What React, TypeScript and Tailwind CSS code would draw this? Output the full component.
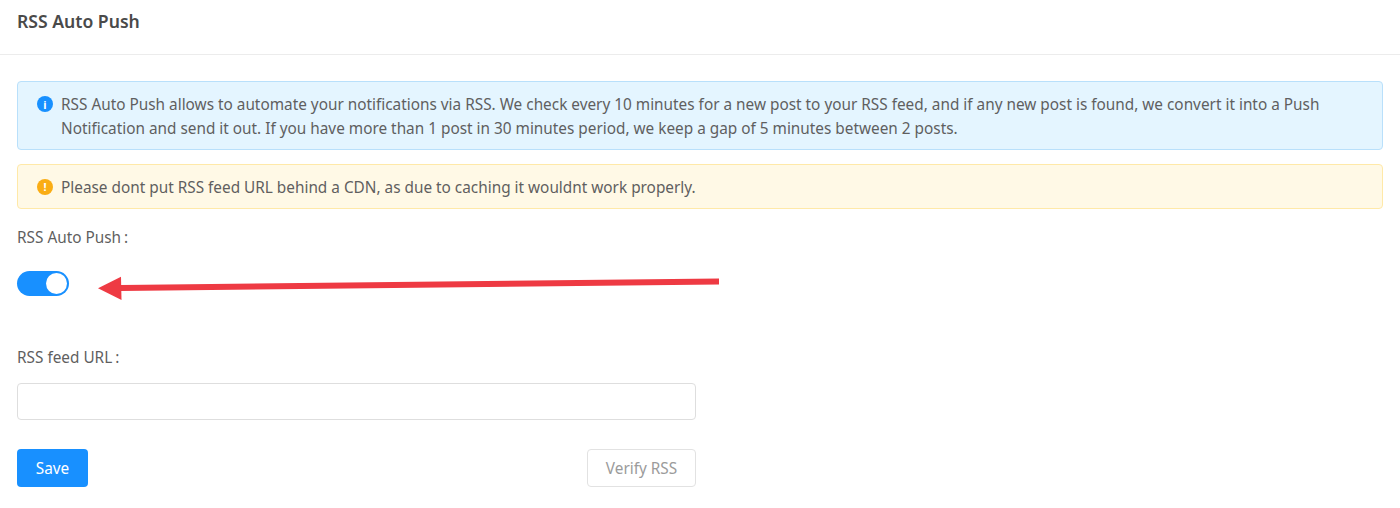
export default function App() {
  return (
    <div className="relative h-[508px] w-[1400px] overflow-hidden bg-white font-['Noto_Sans',sans-serif] text-[15.35px] text-[#5f5f5f]">
      <header className="flex h-[55px] items-start border-b border-[#ececec] px-[17px] pt-[9px]">
        <h1 className="text-[17.6px] font-semibold leading-[24px] text-[#4a4a4a]">RSS Auto Push</h1>
      </header>

      <div className="flex flex-col px-[17px] pt-[26px]">
        <div className="flex h-[69px] gap-[8px] rounded-[4px] border border-[#b9e0fb] bg-[#e4f5ff] pl-[19px] pr-[40px] pt-[10px]">
          <span className="mt-[4px] flex h-[16px] w-[16px] shrink-0 items-center justify-center rounded-full bg-[#1890ff] text-[11px] font-bold leading-none text-white">i</span>
          <p className="leading-[24px]">
            RSS Auto Push allows to automate your notifications via RSS. We check every 10 minutes for a new post to your RSS feed, and if any new post is found, we convert it into a Push Notification and send it out. If you have more than 1 post in 30 minutes period, we keep a gap of 5 minutes between 2 posts.
          </p>
        </div>

        <div className="mt-[14px] flex h-[45px] items-center gap-[8px] rounded-[4px] border border-[#ffe9a8] bg-[#fff9e6] pl-[19px]">
          <span className="flex h-[16px] w-[16px] shrink-0 items-center justify-center rounded-full bg-[#faad14] text-[11px] font-bold leading-none text-white">!</span>
          <p className="leading-[24px]">Please dont put RSS feed URL behind a CDN, as due to caching it wouldnt work properly.</p>
        </div>

        <label className="mt-[16px] leading-[24px]">RSS Auto Push<span className="ml-[3px]">:</span></label>

        <button className="mt-[22px] flex h-[25px] w-[52px] items-center justify-end rounded-full bg-[#1890ff] pr-[2px]">
          <span className="h-[21px] w-[21px] rounded-full bg-white" />
        </button>

        <label className="mt-[49px] leading-[24px]">RSS feed URL<span className="ml-[3px]">:</span></label>

        <input className="mt-[14px] h-[37px] w-[679px] rounded-[4px] border border-[#dedede] bg-white" />

        <div className="mt-[29px] flex w-[679px] items-center justify-between">
          <button className="h-[38px] w-[71px] rounded-[4px] bg-[#1890ff] pt-[2px] text-white">Save</button>
          <button className="h-[38px] w-[109px] rounded-[4px] border border-[#e2e2e2] bg-white pt-[2px] text-[#9b9b9b]">Verify RSS</button>
        </div>
      </div>

      {/* annotation arrow over the form */}
      <svg className="absolute left-[90px] top-[270px]" width="640" height="40" viewBox="0 0 640 40">
        <polygon points="31,15 629,8.5 629,14.5 31,21" fill="#ee3a43" />
        <polygon points="8,18.3 31,6.7 31.5,30" fill="#ee3a43" />
      </svg>
    </div>
  );
}
